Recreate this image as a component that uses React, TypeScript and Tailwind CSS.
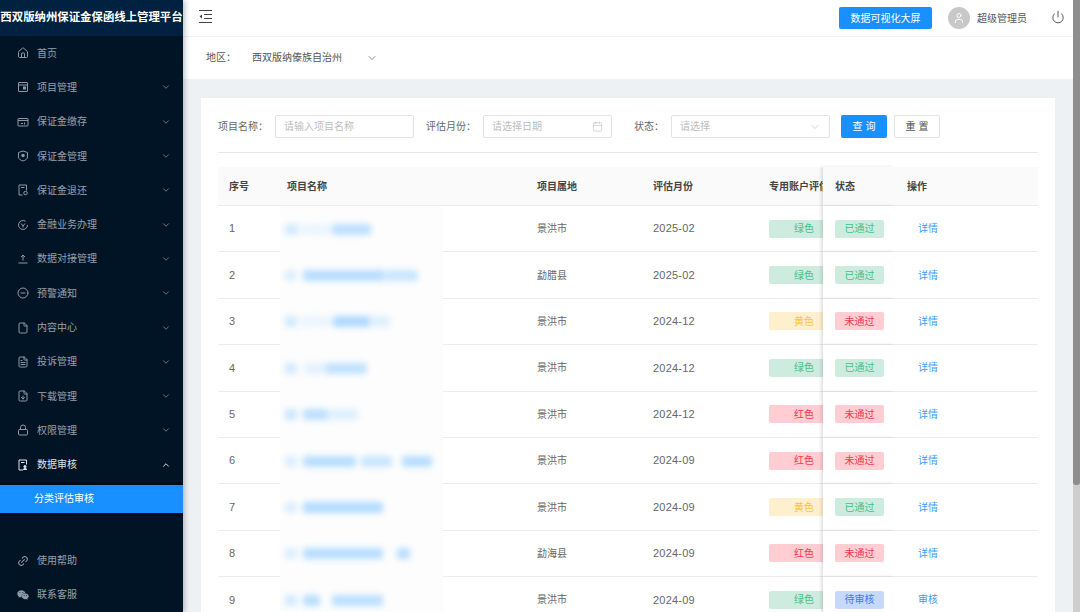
import { ChevronDown, ChevronUp, House, CircleMinus, File, FileText, FileDown, Lock, Link2, Calendar, Power, User } from "lucide-react";
import { FaWeixin } from "react-icons/fa";
import type { ReactNode } from "react";

const svgProps = {
  width: 12,
  height: 12,
  viewBox: "0 0 24 24",
  fill: "none",
  stroke: "currentColor",
  strokeWidth: 2,
};

const ProjectIcon = () => (
  <svg {...svgProps}>
    <rect x="3" y="3" width="18" height="18" rx="1" />
    <path d="M3 8h18" />
    <rect x="12" y="11" width="6" height="6" fill="currentColor" stroke="none" />
  </svg>
);
const PayIcon = () => (
  <svg {...svgProps}>
    <rect x="2" y="5" width="20" height="15" rx="1" />
    <path d="M2 9h20M8 15h4M15 13v4" />
  </svg>
);
const ShieldIcon = () => (
  <svg {...svgProps}>
    <path d="M12 2l9 3v9c0 4-4 6.500-9 8-5-1.500-9-4-9-8V5z" />
    <circle cx="12" cy="11" r="3.500" fill="currentColor" stroke="none" />
  </svg>
);
const RefundIcon = () => (
  <svg {...svgProps}>
    <path d="M11 22H4V2h15v11" />
    <path d="M8 7h7" />
    <circle cx="17" cy="18" r="3.500" />
  </svg>
);
const FinanceIcon = () => (
  <svg {...svgProps}>
    <path d="M21 12a9 9 0 1 1-4-7.500" />
    <path d="M8 9l4 5 4-5M12 14v3" />
  </svg>
);
const DockIcon = () => (
  <svg {...svgProps}>
    <path d="M12 15V4M8 8l4-4 4 4M3 20h18" />
  </svg>
);
const AuditIcon = () => (
  <svg {...svgProps}>
    <path d="M12 22H4V2h15v9" />
    <path d="M8 7h7" />
    <circle cx="16" cy="15" r="3" fill="currentColor" stroke="none" />
    <path d="M12 22c0-3 2-4 4-4s4 1 4 4z" fill="currentColor" stroke="none" />
  </svg>
);

const menus: { label: string; icon: ReactNode }[] = [
  { label: "项目管理", icon: <ProjectIcon /> },
  { label: "保证金缴存", icon: <PayIcon /> },
  { label: "保证金管理", icon: <ShieldIcon /> },
  { label: "保证金退还", icon: <RefundIcon /> },
  { label: "金融业务办理", icon: <FinanceIcon /> },
  { label: "数据对接管理", icon: <DockIcon /> },
  { label: "预警通知", icon: <CircleMinus size={12} /> },
  { label: "内容中心", icon: <File size={12} /> },
  { label: "投诉管理", icon: <FileText size={12} /> },
  { label: "下载管理", icon: <FileDown size={12} /> },
  { label: "权限管理", icon: <Lock size={12} /> },
];

const MenuRow = ({ icon, label, arrow }: { icon: ReactNode; label: string; arrow?: boolean }) => (
  <div className="flex h-[34.3px] items-center pl-[17px] pr-[12px] text-[10px] text-[#98a1ab]">
    <span className="mr-[8px] flex w-[12px] justify-center text-[#8f99a3]">{icon}</span>
    <span className="flex-1">{label}</span>
    {arrow && <ChevronDown size={10} className="text-[#7c8792]" />}
  </div>
);

const Sidebar = () => (
  <div className="relative z-10 flex h-full w-[183px] shrink-0 flex-col bg-[#011426] shadow-[2px_0_5px_rgba(0,21,41,0.25)]">
    <div className="flex h-[36px] items-center justify-center whitespace-nowrap bg-[#002140] text-[11.4px] font-semibold text-white">
      西双版纳州保证金保函线上管理平台
    </div>
    <MenuRow icon={<House size={12} />} label="首页" />
    {menus.map((m) => (
      <MenuRow key={m.label} icon={m.icon} label={m.label} arrow />
    ))}
    <div className="flex h-[34.3px] items-center pl-[17px] pr-[12px] text-[10px] text-[#dfe3e7]">
      <span className="mr-[8px] flex w-[12px] justify-center">
        <AuditIcon />
      </span>
      <span className="flex-1">数据审核</span>
      <ChevronUp size={10} className="text-white" />
    </div>
    <div className="bg-[#000c17] py-[3px]">
      <div className="flex h-[28px] items-center bg-[#1890ff] pl-[34px] text-[10px] text-white">分类评估审核</div>
    </div>
    <div className="mt-auto">
      <MenuRow icon={<Link2 size={12} className="-rotate-45" />} label="使用帮助" />
      <MenuRow icon={<FaWeixin size={12} />} label="联系客服" />
    </div>
  </div>
);

const Header = () => (
  <div className="flex h-[37px] shrink-0 items-center border-b border-[#f2f2f2] bg-white pl-[16px] pr-[8px]">
    <svg className="mb-[4px]" width="14" height="13" viewBox="0 0 14 13" fill="none" stroke="#444" strokeWidth="1">
      <path d="M0 0.500h13M5 4.500h8M5 8.500h8M0 12.500h13" />
      <path d="M3 4.500v4L0.500 6.500z" fill="#444" stroke="none" />
    </svg>
    <button className="ml-auto flex h-[22px] w-[93px] items-center justify-center rounded-[2px] bg-[#1890ff] text-[10px] text-white">
      数据可视化大屏
    </button>
    <div className="ml-[16px] flex h-[22px] w-[22px] items-center justify-center rounded-full bg-[#c8c8c8]">
      <User size={12} className="text-white" />
    </div>
    <span className="ml-[7px] text-[10px] text-[#555]">超级管理员</span>
    <Power size={14} strokeWidth={1.5} className="ml-[24px] mb-[2px] text-[#444]" />
  </div>
);

const RegionBar = () => (
  <div className="flex h-[42px] shrink-0 items-center bg-white pb-[1px] pl-[23px] text-[10px] text-[#555]">
    <span className="w-[46px]">地区：</span>
    <span>西双版纳傣族自治州</span>
    <ChevronDown size={12} strokeWidth={1.3} className="ml-[24px] text-[#555]" />
  </div>
);

const SearchBar = () => (
  <div className="flex h-[23px] items-center text-[10px] text-[#666]">
    <span className="w-[57px]">项目名称：</span>
    <div className="flex h-full w-[139px] items-center rounded-[2px] border border-[#e2e2e2] pl-[8px] text-[#bdbdbd]">请输入项目名称</div>
    <span className="ml-[12px] w-[57px]">评估月份：</span>
    <div className="flex h-full w-[129px] items-center justify-between rounded-[2px] border border-[#e2e2e2] px-[8px] text-[#bdbdbd]">
      请选择日期
      <Calendar size={11} strokeWidth={1.3} />
    </div>
    <span className="ml-[22px] w-[37px]">状态：</span>
    <div className="flex h-full w-[159px] items-center justify-between rounded-[2px] border border-[#e2e2e2] px-[8px] text-[#bdbdbd]">
      请选择
      <ChevronDown size={12} strokeWidth={1.3} />
    </div>
    <button className="ml-[11px] h-full w-[46px] rounded-[2px] bg-[#1890ff] text-white">查 询</button>
    <button className="ml-[7px] h-full w-[46px] rounded-[2px] border border-[#e2e2e2] text-[#555]">重 置</button>
  </div>
);

const levelStyles: Record<string, string> = {
  绿色: "bg-[#cdecdf] text-[#45c08f]",
  黄色: "bg-[#fff0cd] text-[#fdc23e]",
  红色: "bg-[#ffcdd2] text-[#f6384f]",
};
const statusStyles: Record<string, string> = {
  已通过: "bg-[#cdecdf] text-[#45c08f]",
  未通过: "bg-[#ffcdd2] text-[#f6384f]",
  待审核: "bg-[#c6d9fb] text-[#3f78ee]",
};

// blurred project names: [left offset from the patch, width, opacity]
type Seg = [number, number, number];
const rows: { name: Seg[]; area: string; month: string; level: string; status: string; action: string }[] = [
  { name: [[5, 13, 0.5], [20, 32, 0.2], [52, 39, 0.75]], area: "景洪市", month: "2025-02", level: "绿色", status: "已通过", action: "详情" },
  { name: [[5, 11, 0.4], [23, 82, 0.8], [105, 33, 0.6]], area: "勐腊县", month: "2025-02", level: "绿色", status: "已通过", action: "详情" },
  { name: [[5, 12, 0.5], [20, 32, 0.2], [53, 37, 0.9], [90, 20, 0.35]], area: "景洪市", month: "2024-12", level: "黄色", status: "未通过", action: "详情" },
  { name: [[5, 12, 0.5], [25, 20, 0.3], [45, 42, 0.7]], area: "景洪市", month: "2024-12", level: "绿色", status: "已通过", action: "详情" },
  { name: [[5, 12, 0.6], [23, 25, 0.75], [48, 30, 0.35]], area: "景洪市", month: "2024-12", level: "红色", status: "未通过", action: "详情" },
  { name: [[5, 12, 0.4], [23, 53, 0.8], [81, 31, 0.6], [122, 30, 0.8]], area: "景洪市", month: "2024-09", level: "红色", status: "未通过", action: "详情" },
  { name: [[5, 12, 0.4], [23, 80, 0.85]], area: "景洪市", month: "2024-09", level: "黄色", status: "已通过", action: "详情" },
  { name: [[5, 12, 0.4], [23, 80, 0.8], [117, 13, 0.8]], area: "勐海县", month: "2024-09", level: "红色", status: "未通过", action: "详情" },
  { name: [[5, 12, 0.5], [23, 17, 0.8], [52, 51, 0.75]], area: "景洪市", month: "2024-09", level: "绿色", status: "待审核", action: "审核" },
];

const gridCols = "grid grid-cols-[62px_163px_83px_116px_116px_65px_72px_1fr]";
const cell = "flex items-center border-b border-[#ececec]";

const TableHead = () => (
  <div className={`${gridCols} h-[39px] rounded-t-[2px] bg-[#fafafa] text-[10px] font-semibold text-[#444]`}>
    <div className={`${cell} pl-[11px]`}>序号</div>
    <div className={`${cell} col-span-2 pl-[7px]`}>项目名称</div>
    <div className={`${cell} pl-[11px]`}>项目属地</div>
    <div className={`${cell} pl-[11px]`}>评估月份</div>
    <div className={`${cell} overflow-hidden whitespace-nowrap pl-[11px]`}>专用账户评估</div>
    <div className={`${cell} relative bg-[#fafafa] pl-[12px] shadow-[-2px_0_3px_rgba(0,0,0,0.12)]`}>状态</div>
    <div className={`${cell} relative bg-[#fafafa] pl-[12px]`}>操作</div>
  </div>
);

const TableRow = ({ row, index }: { row: (typeof rows)[number]; index: number }) => (
  <div className={`${gridCols} h-[46.4px] text-[10px] text-[#666]`}>
    <div className={`${cell} pl-[11px] font-['Liberation_Sans',sans-serif] text-[11px]`}>{index + 1}</div>
    <div className="relative flex items-center bg-[#fdfdfd]">
      {row.name.map(([left, width, opacity]) => (
        <span
          key={left}
          className="absolute h-[11px] rounded-[2px] bg-[#a6d5ff] blur-[3px]"
          style={{ left, width, opacity }}
        />
      ))}
    </div>
    <div className={cell} />
    <div className={`${cell} pl-[11px]`}>{row.area}</div>
    <div className={`${cell} pl-[11px] font-['Liberation_Sans',sans-serif] text-[11px] tracking-[0.2px]`}>{row.month}</div>
    <div className={`${cell} overflow-hidden pl-[11px]`}>
      <span className={`flex h-[18px] w-[70px] shrink-0 items-center justify-center rounded-[2px] ${levelStyles[row.level]}`}>{row.level}</span>
    </div>
    <div className={`${cell} relative bg-white pl-[12px] shadow-[-2px_0_3px_rgba(0,0,0,0.12)]`}>
      <span className={`flex h-[18px] w-[49px] items-center justify-center rounded-[2px] ${statusStyles[row.status]}`}>{row.status}</span>
    </div>
    <div className={`${cell} relative bg-white pl-[23px] text-[#3c9dfb]`}>{row.action}</div>
  </div>
);

export default function App() {
  return (
    <div className="flex h-[612px] w-[1080px] overflow-hidden bg-white font-['Liberation_Sans','Noto_Sans_CJK_SC',sans-serif]">
      <Sidebar />
      <div className="flex min-w-0 flex-1 flex-col">
        <Header />
        <RegionBar />
        <div className="min-h-0 flex-1 overflow-hidden bg-[#edf1f4] pl-[18px] pr-[18px] pt-[19px]">
          <div className="bg-white px-[17px] pt-[17px]">
            <SearchBar />
            <div className="mb-[14px] mt-[14px] h-px bg-[#e6e6e6]" />
            <TableHead />
            {rows.map((row, i) => (
              <TableRow key={i} row={row} index={i} />
            ))}
          </div>
        </div>
      </div>
      {/* window scrollbar */}
      <div className="h-full w-[7px] shrink-0 bg-[#cdcdcd]">
        <div className="h-[485px] rounded-b-[3px] bg-[#8e8e8e]" />
      </div>
    </div>
  );
}
